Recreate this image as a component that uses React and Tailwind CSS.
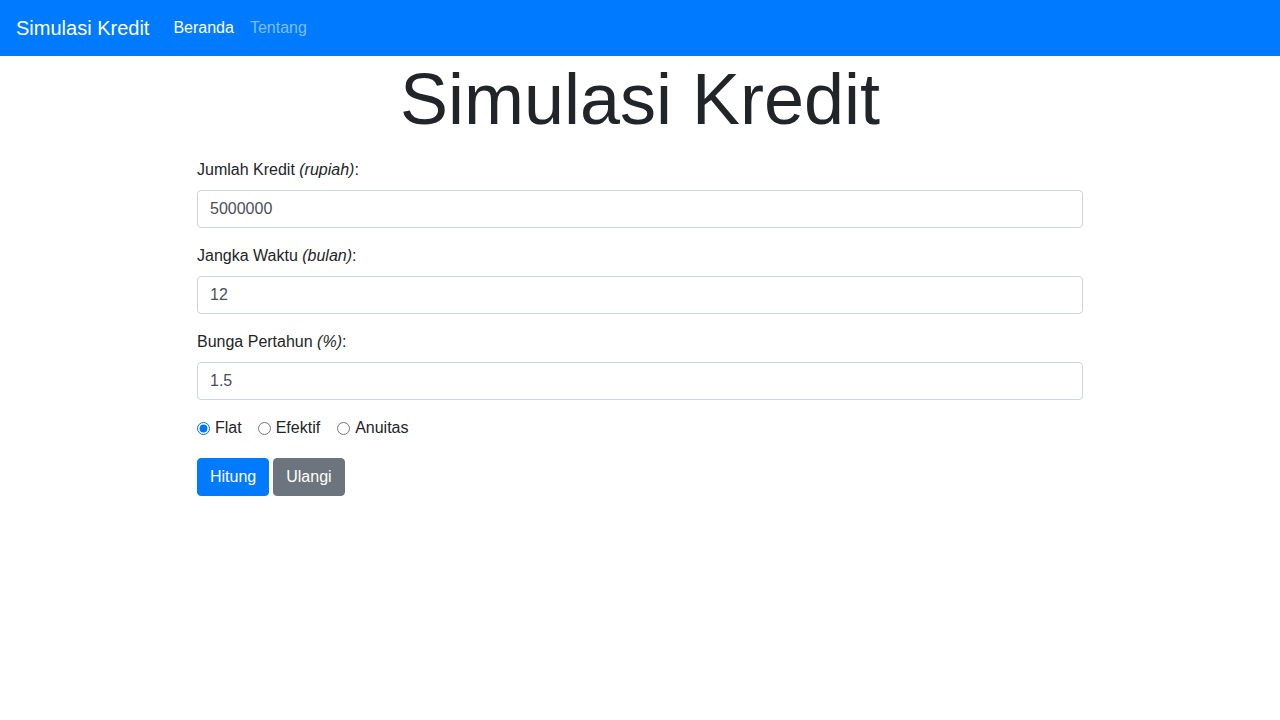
export default function App() {
  const font = { fontFamily: '"Liberation Sans", Arial, sans-serif' };
  return (
    <div style={font} className="min-h-[720px] bg-white text-[#212529] text-base leading-6">
      <nav className="h-14 bg-[#007bff] flex items-center px-4">
        <a className="text-white text-xl leading-[30px] py-[5px] mr-4">Simulasi Kredit</a>
        <a className="text-white px-2 py-2">Beranda</a>
        <a className="text-[#80bdff] px-2 py-2">Tentang</a>
      </nav>
      <div className="w-[886px] mx-auto">
        <h1 className="text-[72px] font-light leading-[1.2] text-center mb-4">Simulasi Kredit</h1>
        <div className="mb-4">
          <label className="block mb-2">
            Jumlah Kredit <i>(rupiah)</i>:
          </label>
          <input
            type="text"
            defaultValue="5000000"
            className="block w-full h-[38px] px-3 py-1.5 border border-[#ced4da] rounded text-[#495057] outline-none"
          />
        </div>
        <div className="mb-4">
          <label className="block mb-2">
            Jangka Waktu <i>(bulan)</i>:
          </label>
          <input
            type="text"
            defaultValue="12"
            className="block w-full h-[38px] px-3 py-1.5 border border-[#ced4da] rounded text-[#495057] outline-none"
          />
        </div>
        <div className="mb-4">
          <label className="block mb-2">
            Bunga Pertahun <i>(%)</i>:
          </label>
          <input
            type="text"
            defaultValue="1.5"
            className="block w-full h-[38px] px-3 py-1.5 border border-[#ced4da] rounded text-[#495057] outline-none"
          />
        </div>
        <div className="flex items-center h-6 mb-[18px]">
          <label className="flex items-center mr-4">
            <input type="radio" name="m" defaultChecked className="m-0 mr-[5px] w-[13px] h-[13px]" />
            Flat
          </label>
          <label className="flex items-center mr-[17px]">
            <input type="radio" name="m" className="m-0 mr-[5px] w-[13px] h-[13px]" />
            Efektif
          </label>
          <label className="flex items-center">
            <input type="radio" name="m" className="m-0 mr-[5px] w-[13px] h-[13px]" />
            Anuitas
          </label>
        </div>
        <div className="flex gap-1">
          <button className="h-[38px] px-3 rounded border border-[#007bff] bg-[#007bff] text-white">Hitung</button>
          <button className="h-[38px] px-3 rounded border border-[#6c757d] bg-[#6c757d] text-white">Ulangi</button>
        </div>
      </div>
    </div>
  );
}
